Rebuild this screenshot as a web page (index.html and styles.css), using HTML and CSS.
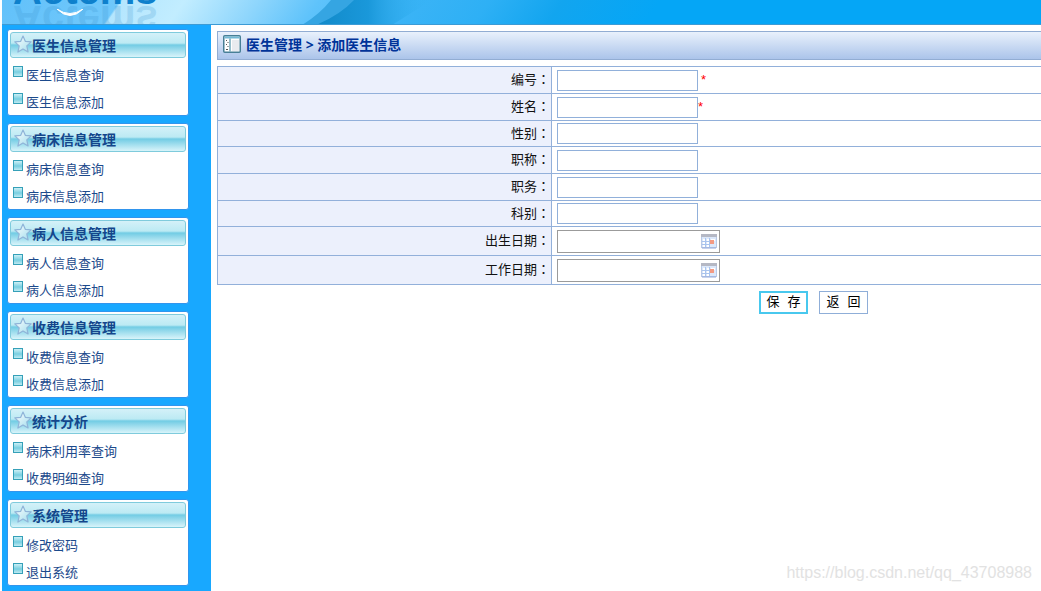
FILE: index.html
```html
<!DOCTYPE html>
<html lang="zh-CN">
<head>
<meta charset="utf-8">
<title>添加医生信息</title>
<link rel="stylesheet" href="styles.css">
<script src="app.js" defer></script>
</head>
<body>
<svg class="defs" aria-hidden="true">
  <defs>
    <linearGradient id="sq" x1="0" y1="0" x2="0" y2="1"><stop offset="0" stop-color="#d4f3f8"/><stop offset=".55" stop-color="#78cee0"/><stop offset="1" stop-color="#c5edf4"/></linearGradient>
    <linearGradient id="st" x1="0" y1="0" x2="1" y2="1"><stop offset="0" stop-color="#ffffff"/><stop offset="1" stop-color="#9fdcec"/></linearGradient>
  </defs>
  <symbol id="star" viewBox="0 0 18 18"><path d="M9 1 11.3 6.3 17.2 6.9 12.8 10.9 14.1 17 9 13.9 3.9 17 5.2 10.9 .8 6.9 6.7 6.3Z" fill="url(#st)" stroke="#8fb4d8" stroke-width="1.2" stroke-linejoin="round"/></symbol>
  <symbol id="square" viewBox="0 0 10 11"><rect x=".5" y=".5" width="9" height="10" fill="url(#sq)" stroke="#35a0b8"/></symbol>
  <symbol id="calendar" viewBox="0 0 16 16">
    <rect x=".5" y="1.5" width="15" height="13" fill="#dce8fa" stroke="#b9c9e6"/>
    <path d="M0 1h16v3H0z" fill="#b5b8c4"/>
    <path d="M2 6h3v2H2zM6 6h3v2H6zM10 6h4v2h-4zM2 9h3v2H2zM6 9h2v2H6zM2 12h3v2H2zM6 12h3v2H6z" fill="#fff"/>
    <path d="M4.5 5v9M8.5 5v9M1 8.5h8M1 11.5h8" stroke="#a9c4ee" fill="none"/>
    <rect x="9" y="7" width="4" height="4" fill="#f39a83"/><path d="M1 15h14" stroke="#91a8dc"/>
  </symbol>
</svg>
<header class="banner">
  <svg class="ribbon" viewBox="0 0 230 25" aria-hidden="true">
    <defs><linearGradient id="rb" x1="0" y1="0" x2="1" y2="0"><stop offset="0" stop-color="#1189c8"/><stop offset=".45" stop-color="#1a98da"/><stop offset="1" stop-color="#35b4f6" stop-opacity="0"/></linearGradient></defs>
    <path d="M0 25Q18 14 29 0H62Q50 14 25 25Z" fill="#35a5e2"/>
    <path d="M14 25Q38 15 52 0H130L90 25Z" fill="url(#rb)"/>
  </svg>
  <div class="logo">Actems</div>
  <div class="logo-reflection" aria-hidden="true">Actems</div>
  <svg class="smile" viewBox="0 0 26 9" aria-hidden="true"><path d="M0 0Q13 13 26 0Q13 9 0 0Z" fill="#fff" stroke="#fff"/></svg>
</header>
<div class="layout">
  <nav class="sidebar">
    <section class="panel"><h2 class="panel-title"><svg class="star"><use href="#star"/></svg>医生信息管理</h2>
      <a class="item" href="#"><svg class="square"><use href="#square"/></svg>医生信息查询</a>
      <a class="item" href="#"><svg class="square"><use href="#square"/></svg>医生信息添加</a></section>
    <section class="panel"><h2 class="panel-title"><svg class="star"><use href="#star"/></svg>病床信息管理</h2>
      <a class="item" href="#"><svg class="square"><use href="#square"/></svg>病床信息查询</a>
      <a class="item" href="#"><svg class="square"><use href="#square"/></svg>病床信息添加</a></section>
    <section class="panel"><h2 class="panel-title"><svg class="star"><use href="#star"/></svg>病人信息管理</h2>
      <a class="item" href="#"><svg class="square"><use href="#square"/></svg>病人信息查询</a>
      <a class="item" href="#"><svg class="square"><use href="#square"/></svg>病人信息添加</a></section>
    <section class="panel"><h2 class="panel-title"><svg class="star"><use href="#star"/></svg>收费信息管理</h2>
      <a class="item" href="#"><svg class="square"><use href="#square"/></svg>收费信息查询</a>
      <a class="item" href="#"><svg class="square"><use href="#square"/></svg>收费信息添加</a></section>
    <section class="panel"><h2 class="panel-title"><svg class="star"><use href="#star"/></svg>统计分析</h2>
      <a class="item" href="#"><svg class="square"><use href="#square"/></svg>病床利用率查询</a>
      <a class="item" href="#"><svg class="square"><use href="#square"/></svg>收费明细查询</a></section>
    <section class="panel"><h2 class="panel-title"><svg class="star"><use href="#star"/></svg>系统管理</h2>
      <a class="item" href="#"><svg class="square"><use href="#square"/></svg>修改密码</a>
      <a class="item" href="#"><svg class="square"><use href="#square"/></svg>退出系统</a></section>
  </nav>
  <main class="content">
    <h1 class="page-title">
      <svg class="page-icon" viewBox="0 0 18 18" aria-hidden="true"><rect x=".75" y=".75" width="16.5" height="16.5" rx="1" fill="#fff" stroke="#477f96" stroke-width="1.5"/><path d="M1.5 1.5h15v2h-15z" fill="#72b9d5"/><path d="M7 3.5v13" stroke="#5e9bb0" stroke-width="1.3"/><path d="M9 5h7v11H9z" fill="#e9ebef"/><path d="M3 5.5h1M4.5 7.5h1M3 9.5h1M4.5 11.5h1M3 14.5h2" stroke="#555"/></svg>
      医生管理 &gt; 添加医生信息
    </h1>
    <form class="doctor-form">
      <table class="fields">
        <tr><th><label for="no">编号<span class="colon" lang="zh-TW">：</span></label></th><td><input class="text" id="no" type="text"> <span class="required">*</span></td></tr>
        <tr><th><label for="name">姓名<span class="colon" lang="zh-TW">：</span></label></th><td><input class="text" id="name" type="text"><span class="required">*</span></td></tr>
        <tr><th><label for="sex">性别<span class="colon" lang="zh-TW">：</span></label></th><td><input class="text" id="sex" type="text"></td></tr>
        <tr><th><label for="title">职称<span class="colon" lang="zh-TW">：</span></label></th><td><input class="text" id="title" type="text"></td></tr>
        <tr><th><label for="duty">职务<span class="colon" lang="zh-TW">：</span></label></th><td><input class="text" id="duty" type="text"></td></tr>
        <tr><th><label for="dept">科别<span class="colon" lang="zh-TW">：</span></label></th><td><input class="text" id="dept" type="text"></td></tr>
        <tr class="date-row"><th><label for="birth">出生日期<span class="colon" lang="zh-TW">：</span></label></th><td><div class="date"><input class="date-input" id="birth" type="text"><button class="pick" type="button" aria-label="选择出生日期"><svg class="calendar"><use href="#calendar"/></svg></button></div></td></tr>
        <tr class="date-row"><th><label for="work">工作日期<span class="colon" lang="zh-TW">：</span></label></th><td><div class="date"><input class="date-input" id="work" type="text"><button class="pick" type="button" aria-label="选择工作日期"><svg class="calendar"><use href="#calendar"/></svg></button></div></td></tr>
      </table>
      <div class="actions"><button class="btn btn-primary" type="submit">保 存</button><button class="btn" type="button">返 回</button></div>
    </form>
    <div class="watermark">https://blog.csdn.net/qq_43708988</div>
  </main>
</div>
</body>
</html>
```

FILE: styles.css
```css
* { box-sizing: border-box; }
body {
  margin: 0;
  padding-left: 2px;
  min-height: 100vh;
  display: flex;
  flex-direction: column;
  background: #fff;
  color: #111;
  font: 13px/20px "Noto Sans CJK SC", sans-serif;
}
.defs { position: absolute; width: 0; height: 0; }
.banner {
  position: relative;
  height: 25px;
  flex: none;
  overflow: hidden;
  border-bottom: 1px solid #3c9bd5;
  background: linear-gradient(125deg, #62c1fa 0, #70c8fb 97px, #b4e6fe 99px, #c2edff 150px, #8fd6fc 210px, #5fc3fb 260px, #3cb4f6 330px, #2eb0f5 400px, #12a5ef 460px, #05a6f6 540px);
}
.ribbon { position: absolute; left: 300px; top: 0; width: 230px; height: 25px; }
.logo, .logo-reflection {
  position: absolute;
  left: 11px;
  font: bold 40px/40px "Liberation Sans", sans-serif;
  color: #0e80cc;
}
.logo { top: -30px; }
.logo-reflection { top: 0; transform: scaleY(-1); color: #368ecb; opacity: .2; }
.smile { position: absolute; left: 55px; top: 9px; width: 26px; height: 9px; }
.layout { flex: 1; display: flex; }
.sidebar {
  flex: none;
  width: 209px;
  display: flex;
  flex-direction: column;
  gap: 7px;
  padding: 4px 22px 6px 5px;
  background: #18a8ff;
}
.panel {
  height: 87px;
  padding: 2px;
  background: #fff;
  border: 1px solid #3295ed;
  border-radius: 3px;
}
.panel-title {
  display: flex;
  align-items: center;
  height: 26px;
  margin: 0 0 5px;
  padding: 0 0 1px 3px;
  border: 1px solid #7fcbdc;
  border-radius: 3px;
  background: linear-gradient(#d4f1f8 0, #bceaf3 42%, #72cce4 50%, #a6e0ef 75%, #d8f4fa 100%);
  color: #14468b;
  font-size: 14px;
  line-height: 20px;
}
.star { width: 18px; height: 18px; margin-bottom: 2px; }
.item {
  display: flex;
  align-items: flex-start;
  gap: 3px;
  height: 27px;
  padding: 2px 0 0 3px;
  color: #1c4a8c;
  text-decoration: none;
}
.square { width: 10px; height: 11px; margin-top: 1px; }
.content { position: relative; flex: 1; min-width: 0; padding: 6px 0 0 6px; }
.page-title {
  display: flex;
  align-items: center;
  gap: 5px;
  height: 29px;
  margin: 0 0 6px;
  padding: 0 0 2px 5px;
  border: 1px solid #92add3;
  border-right: 0;
  background: linear-gradient(#e9f1fc, #abc4ea);
  color: #003399;
  font: bold 14px/20px "Open Sans", "Noto Sans CJK SC", sans-serif;
}
.page-icon { width: 18px; height: 18px; margin-bottom: 2px; }
.fields { width: 100%; border-collapse: collapse; border-top: 1px solid #92b0da; border-left: 1px solid #92b0da; }
.fields tr { height: 27px; }
.fields tr:nth-child(3n) { height: 26px; }
.fields .date-row { height: 29px; }
.fields th, .fields td { padding: 0; border-bottom: 1px solid #92b0da; }
.fields th {
  width: 334px;
  padding: 0 1px 2px 0;
  border-right: 1px solid #92b0da;
  background: #ecf0fc;
  font-weight: normal;
  text-align: right;
}
.fields td { padding-left: 5px; line-height: 20px; }
.colon { font-family: "Noto Sans CJK TC", sans-serif; }
.text {
  width: 141px;
  height: 21px;
  padding: 0 3px;
  border: 1px solid #91b0da;
  background: #fff;
  vertical-align: middle;
}
.required { color: #ff0000; font: 13px/16px "Liberation Sans", sans-serif; }
.date { display: flex; align-items: center; width: 163px; height: 23px; padding-right: 2px; border: 1px solid #9b9b9b; }
.date-input { flex: 1; min-width: 0; height: 20px; border: 0; background: none; }
.pick { display: flex; padding: 0; border: 0; background: none; }
.calendar { width: 16px; height: 16px; }
.actions { display: flex; justify-content: center; gap: 11px; margin-top: 6px; padding-left: 369px; }
.btn {
  width: 49px;
  height: 23px;
  padding: 0;
  border: 1px solid #8faed8;
  background: #fff;
  color: #000;
  font: 13px/18px "Liberation Mono", "Noto Sans CJK SC", monospace;
  white-space: pre;
}
.btn-primary { border: 2px solid #48c8ee; }
.watermark {
  position: absolute;
  right: 9px;
  bottom: 9px;
  color: #e2e2e2;
  font: 16px/20px "Liberation Sans", sans-serif;
}
```

FILE: app.js
```js
document.querySelector(".doctor-form").addEventListener("submit", function (event) {
  event.preventDefault();
});
```
